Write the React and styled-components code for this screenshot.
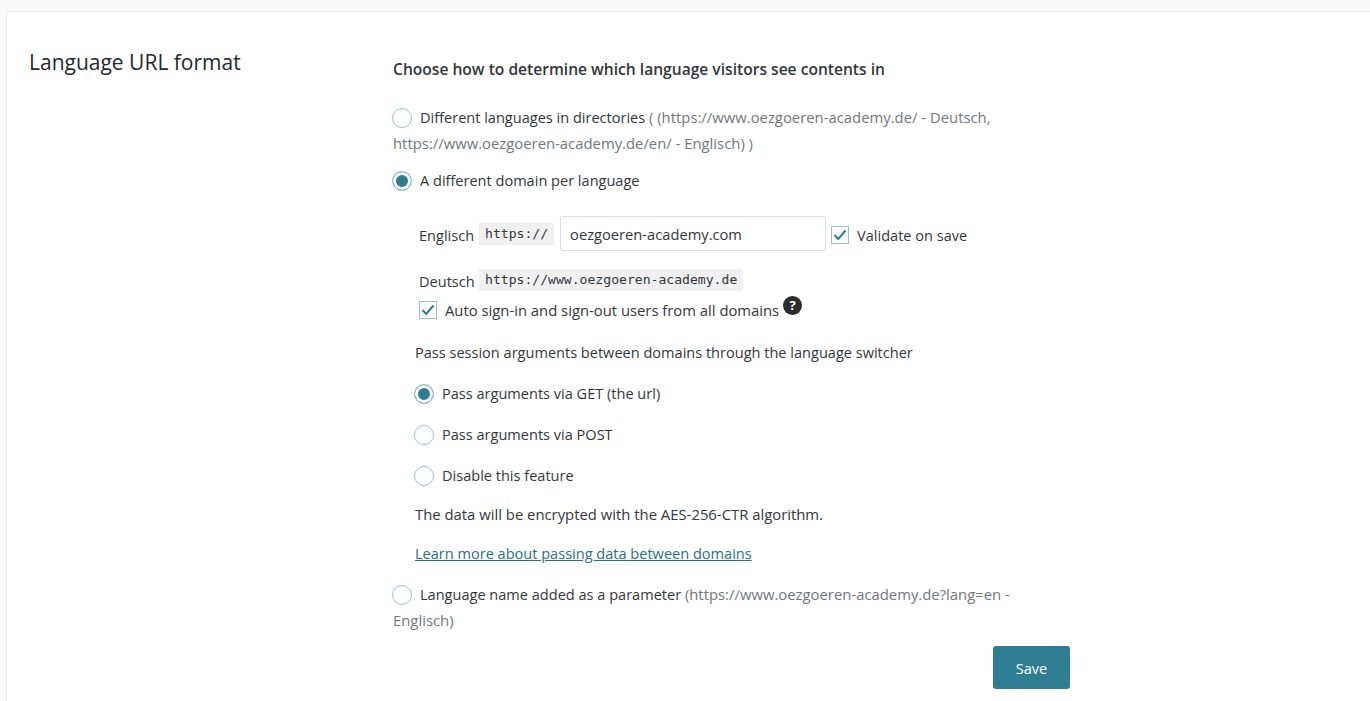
import React from 'react';
import styled, { createGlobalStyle } from 'styled-components';

const GlobalStyle = createGlobalStyle`
  html, body {
    margin: 0;
    height: 100%;
    overflow: hidden;
    background: #f9f9f9;
    font-family: "Open Sans", "Noto Sans", sans-serif;
    font-size: 14.56px;
    color: #32373c;
  }
`;

export default function App() {
  return (
    <Page>
      <GlobalStyle />
      <Card>
        <Title>Language URL format</Title>
        <Content>
          <Lead>Choose how to determine which language visitors see contents in</Lead>

          <Option $top={23}>
            <Radio />
            Different languages in directories <Muted>( (https://www.oezgoeren-academy.de/ - Deutsch,</Muted> <Muted>https://www.oezgoeren-academy.de/en/ - Englisch) )</Muted>
          </Option>
          <Option $top={11}>
            <Radio $checked />
            A different domain per language
          </Option>

          <Domains>
            <DomainRow>
              <DomainLabel>Englisch</DomainLabel>
              <Code>https://</Code>
              <DomainInput defaultValue="oezgoeren-academy.com" />
              <Check />
              <CheckLabel>Validate on save</CheckLabel>
            </DomainRow>
            <DomainRow $top={17}>
              <DomainLabel>Deutsch</DomainLabel>
              <Code>https://www.oezgoeren-academy.de</Code>
            </DomainRow>
            <AutoRow>
              <Check />
              <CheckLabel $size={14.82}>Auto sign-in and sign-out users from all domains</CheckLabel>
              <Help>?</Help>
            </AutoRow>
          </Domains>

          <Session>
            <SessionText>Pass session arguments between domains through the language switcher</SessionText>
            <SubOption $top={17}><Radio $checked />Pass arguments via GET (the url)</SubOption>
            <SubOption><Radio />Pass arguments via POST</SubOption>
            <SubOption><Radio />Disable this feature</SubOption>
            <SessionText $top={15} $size={14.85}>The data will be encrypted with the AES-256-CTR algorithm.</SessionText>
            <LearnMore href="#">Learn more about passing data between domains</LearnMore>
          </Session>

          <Option $top={16}>
            <Radio />
            Language name added as a parameter <Muted>(https://www.oezgoeren-academy.de?lang=en -</Muted> <Muted>Englisch)</Muted>
          </Option>

          <Actions>
            <SaveButton>Save</SaveButton>
          </Actions>
        </Content>
      </Card>
    </Page>
  );
}

function Check() {
  return (
    <CheckBox>
      <svg width="14" height="12" viewBox="0 0 14 12" fill="none">
        <path d="M1.5 6 L5.2 10 L12.5 1.5" stroke="#2e7d93" strokeWidth="2" />
      </svg>
    </CheckBox>
  );
}

const Page = styled.div`
  height: 701px;
  padding: 11px 0 0 6px;
  box-sizing: border-box;
  overflow: hidden;
`;

const Card = styled.div`
  display: flex;
  height: 800px;
  background: #fff;
  border: 1px solid #eaeaea;
  border-right: none;
  box-sizing: border-box;
`;

const Title = styled.h2`
  width: 386px;
  flex: none;
  margin: 0;
  padding: 35px 0 0 22px;
  box-sizing: border-box;
  font-size: 21px;
  font-weight: 400;
  line-height: 30px;
  color: #23282d;
`;

const Content = styled.div`
  width: 677px;
  padding-top: 45px;
`;

const Lead = styled.div`
  font-size: 15.6px;
  font-weight: 600;
  line-height: 24px;
  color: #32373c;
`;

const Option = styled.div`
  margin-top: ${(props) => props.$top || 0}px;
  line-height: 26px;
`;

const Muted = styled.span`
  display: inline-block;
  font-size: 14.85px;
  color: #72777c;
`;

const Radio = styled.span`
  display: inline-block;
  box-sizing: border-box;
  width: 20px;
  height: 20px;
  margin: 0 8px 0 -1px;
  vertical-align: -5px;
  border-radius: 50%;
  border: 1px solid #9fc0c9;
  background: ${(props) => (props.$checked ? '#2e7d93' : '#fff')};
  box-shadow: ${(props) => (props.$checked ? 'inset 0 0 0 3px #fff' : 'none')};
`;

const Domains = styled.div`
  padding: 23px 0 0 26px;
`;

const DomainRow = styled.div`
  display: flex;
  align-items: center;
  margin-top: ${(props) => props.$top || 0}px;
`;

const DomainLabel = styled.span`
  flex: none;
  width: 55px;
  margin: 3px 5px 0 0;
`;

const Code = styled.code`
  background: #f0f0f1;
  padding: 0 6px;
  font-family: "DejaVu Sans Mono", "Liberation Mono", monospace;
  font-size: 13.1px;
  line-height: 22px;
`;

const DomainInput = styled.input`
  width: 266px;
  height: 35px;
  margin: 0 5px 0 6px;
  padding: 0 9px;
  box-sizing: border-box;
  border: 1px solid #ddd;
  border-radius: 2px;
  font: inherit;
  font-size: 14.7px;
  color: #32373c;
`;

const CheckBox = styled.span`
  display: flex;
  align-items: center;
  justify-content: center;
  flex: none;
  box-sizing: border-box;
  width: 18px;
  height: 18px;
  margin: 2px 8px 0 0;
  border: 1px solid #9fc0c9;
  background: #fff;
`;

const CheckLabel = styled.span`
  margin-top: 2px;
  font-size: ${(props) => props.$size || 14.56}px;
`;

const AutoRow = styled.div`
  display: flex;
  align-items: center;
  margin-top: 7px;
`;

const Help = styled.span`
  display: flex;
  align-items: center;
  justify-content: center;
  width: 19px;
  height: 19px;
  margin: -8px 0 0 4px;
  border-radius: 50%;
  background: #2b2b2b;
  color: #fff;
  font-size: 13px;
  font-weight: 700;
`;

const Session = styled.div`
  padding: 20px 0 0 22px;
`;

const SessionText = styled.div`
  margin-top: ${(props) => props.$top || 0}px;
  font-size: ${(props) => props.$size || 14.56}px;
  line-height: 24px;
`;

const SubOption = styled.div`
  margin-top: ${(props) => props.$top || 17}px;
  line-height: 24px;
`;

const LearnMore = styled.a`
  display: block;
  margin-top: 15px;
  line-height: 24px;
  color: #2b7083;
`;

const Actions = styled.div`
  display: flex;
  justify-content: flex-end;
  margin-top: 13px;
`;

const SaveButton = styled.button`
  width: 77px;
  height: 43px;
  border: none;
  border-radius: 3px;
  background: #2e7d93;
  color: #fff;
  font: inherit;
`;
